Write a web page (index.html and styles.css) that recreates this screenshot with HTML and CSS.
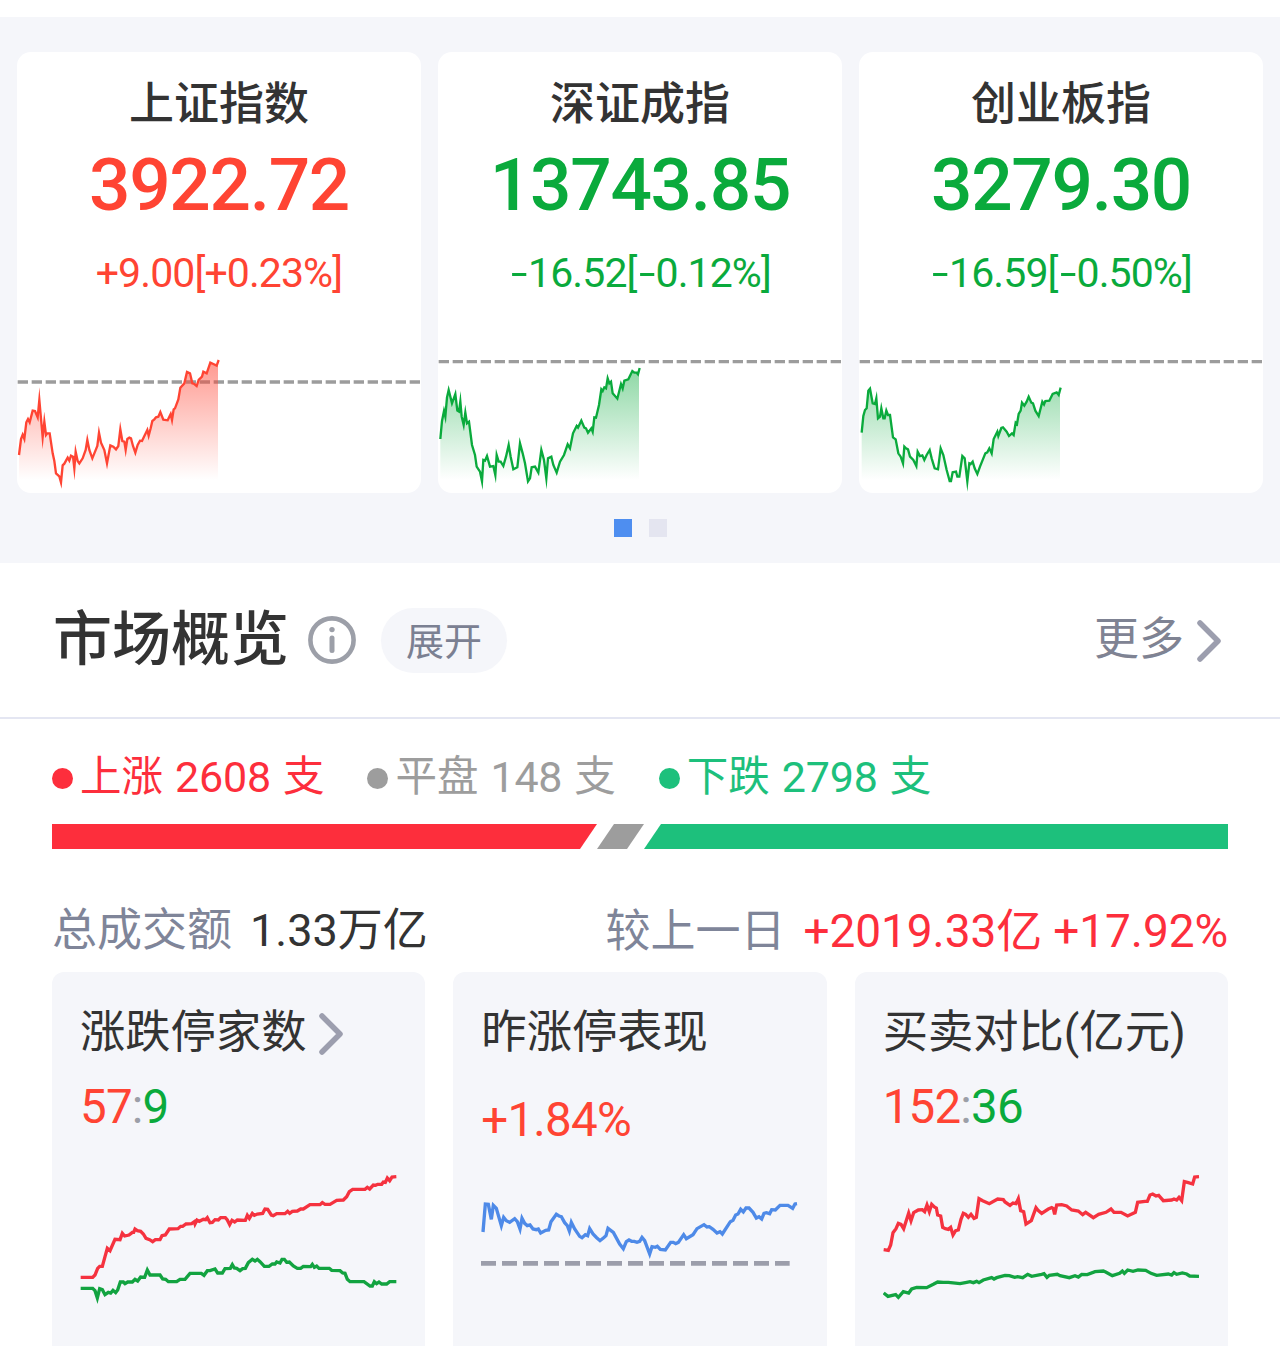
FILE: index.html
```html
<!DOCTYPE html>
<html lang="zh-CN">
<head>
    <meta charset="UTF-8">
    <meta name="viewport" content="width=device-width, initial-scale=1.0">
    <title>市场概览</title>
    <link rel="stylesheet" href="styles.css">
</head>
<body>

<section class="indices">
    <div class="index-list">
        <div class="index-card up">
            <h3>上证指数</h3>
            <div class="price">3922.72</div>
            <div class="change">+9.00[+0.23%]</div>
            <svg class="trend" viewBox="51 0 1212 459">
                <defs>
                    <linearGradient id="fillUp" gradientUnits="userSpaceOnUse" x1="0" y1="60" x2="0" y2="420">
                        <stop offset="0" stop-color="#ff4433" stop-opacity="0.55"/>
                        <stop offset="1" stop-color="#ff4433" stop-opacity="0"/>
                    </linearGradient>
                </defs>
                <line class="base" x1="53" y1="126" x2="1263" y2="126"/>
                <polygon fill="url(#fillUp)" points="57,420 57,345 63,297 68,284 73,297 79,247 84,237 89,247 98,212 105,213 113,232 118,180 128,292 133,245 138,285 142,280 149,280 158,340 163,363 168,400 178,409 183,420 188,376 193,371 203,353 208,362 213,347 219,350 223,385 227,335 233,363 238,370 248,355 257,330 262,300 268,330 277,355 292,318 297,278 303,308 313,330 321,370 331,316 340,320 348,328 355,318 361,268 367,303 373,305 377,330 382,297 388,293 393,295 399,318 406,338 413,315 420,302 426,303 432,290 442,270 446,287 452,265 457,243 463,238 468,232 475,230 481,216 490,239 503,241 512,222 516,240 521,208 525,205 535,178 541,143 553,130 561,96 570,100 577,130 583,132 590,138 596,120 606,110 610,95 620,100 631,68 650,77 654,65 654,420"/>
                <polyline class="line" points="57,345 63,297 68,284 73,297 79,247 84,237 89,247 98,212 105,213 113,232 118,180 128,292 133,245 138,285 142,280 149,280 158,340 163,363 168,400 178,409 183,427 188,376 193,371 203,353 208,362 213,347 219,350 223,385 227,335 233,363 238,370 248,355 257,330 262,300 268,330 277,355 292,318 297,278 303,308 313,330 321,370 331,316 340,320 348,328 355,318 361,268 367,303 373,305 377,330 382,297 388,293 393,295 399,318 406,338 413,315 420,302 426,303 432,290 442,270 446,287 452,265 457,243 463,238 468,232 475,230 481,216 490,239 503,241 512,222 516,240 521,208 525,205 535,178 541,143 553,130 561,96 570,100 577,130 583,132 590,138 596,120 606,110 610,95 620,100 631,68 640,72 650,77 656,60"/>
            </svg>
        </div>
        <div class="index-card down">
            <h3>深证成指</h3>
            <div class="price">13743.85</div>
            <div class="change"><i>-</i>16.52[<i>-</i>0.12%]</div>
            <svg class="trend" viewBox="24 0 1212 459">
                <defs>
                    <linearGradient id="fillDown" gradientUnits="userSpaceOnUse" x1="0" y1="60" x2="0" y2="420">
                        <stop offset="0" stop-color="#0aaa3c" stop-opacity="0.5"/>
                        <stop offset="1" stop-color="#0aaa3c" stop-opacity="0"/>
                    </linearGradient>
                </defs>
                <line class="base" x1="26" y1="65" x2="1236" y2="65"/>
                <polygon fill="url(#fillDown)" points="31,420 31,297 36,243 42,213 46,230 51,172 56,150 66,190 76,162 82,212 87,215 91,185 95,230 101,255 106,218 111,250 117,245 126,315 135,345 140,380 150,395 156,420 160,360 165,362 171,348 180,380 190,378 196,400 200,345 206,365 212,365 220,378 228,350 236,315 242,350 250,388 262,382 270,310 278,340 285,370 294,420 300,410 305,382 315,380 325,398 334,330 342,360 349,410 354,355 364,350 370,375 380,398 390,365 402,345 413,313 420,325 429,280 440,258 444,263 454,242 463,263 468,265 474,278 484,265 488,275 493,232 498,233 507,195 514,148 518,153 523,142 528,145 533,115 538,130 543,125 548,160 562,176 573,132 578,145 583,122 595,118 607,93 620,98 627,92 627,420"/>
                <polyline class="line" points="31,297 36,243 42,213 46,230 51,172 56,150 66,190 76,162 82,212 87,215 91,185 95,230 101,255 106,218 111,250 117,245 126,315 135,345 140,380 150,395 156,424 160,360 165,362 171,348 180,380 190,378 196,405 200,345 206,365 212,365 220,378 228,350 236,315 242,350 250,388 262,382 270,310 278,340 285,370 294,424 300,415 305,382 315,380 325,398 334,330 342,360 349,415 354,355 364,350 370,375 380,398 390,365 402,345 413,313 420,325 429,280 440,258 444,263 454,242 463,263 468,265 474,278 484,265 488,275 493,232 498,233 507,195 514,148 518,153 523,142 528,145 533,115 538,130 543,125 548,160 562,176 573,132 578,145 583,122 595,118 607,93 613,98 620,98 624,103 629,84"/>
            </svg>
        </div>
        <div class="index-card down">
            <h3>创业板指</h3>
            <div class="price">3279.30</div>
            <div class="change"><i>-</i>16.59[<i>-</i>0.50%]</div>
            <svg class="trend" viewBox="27 0 1212 459">
                <line class="base" x1="29" y1="65" x2="1239" y2="65"/>
                <polygon fill="url(#fillDown)" points="35,420 35,278 40,228 45,210 50,205 55,152 60,146 68,190 75,192 79,175 84,235 90,230 94,205 100,235 104,235 109,212 114,225 120,225 129,292 137,298 145,340 152,350 159,370 163,320 168,325 174,328 180,350 190,360 199,378 203,335 210,348 217,346 223,360 230,345 239,330 245,355 254,385 264,388 272,325 280,345 290,390 299,420 303,420 308,397 318,395 326,412 337,348 344,355 352,412 358,370 368,365 374,385 382,402 390,380 406,340 412,337 418,325 425,340 431,297 442,275 445,288 454,264 459,262 470,275 477,288 486,280 491,285 497,248 501,252 506,222 512,212 516,188 523,197 530,185 536,170 544,188 549,190 556,212 566,228 577,185 582,193 586,183 598,182 608,162 620,157 630,155 630,420"/>
                <polyline class="line" points="35,278 40,228 45,210 50,205 55,152 60,146 68,190 75,192 79,175 84,235 90,230 94,205 100,235 104,235 109,212 114,225 120,225 129,292 137,298 145,340 152,350 159,370 163,320 168,325 174,328 180,350 190,360 199,378 203,335 210,348 217,346 223,360 230,345 239,330 245,355 254,385 264,388 272,325 280,345 290,390 299,423 303,423 308,397 318,395 322,410 328,410 337,348 344,355 352,424 358,370 362,372 368,365 374,385 382,402 390,380 406,340 412,337 418,325 425,340 431,297 442,275 445,288 454,264 459,262 470,275 477,288 486,280 491,285 497,248 501,252 506,222 512,212 516,188 523,197 530,185 536,170 544,188 549,190 556,212 566,228 577,185 582,193 586,183 598,182 608,162 620,157 626,165 632,143"/>
            </svg>
        </div>
    </div>
    <div class="pager">
        <span class="active"></span>
        <span></span>
    </div>
</section>

<header class="overview-header">
    <h2>市场概览</h2>
    <svg class="info" viewBox="0 0 48 48">
        <circle cx="24" cy="24" r="21.6" fill="none" stroke="currentColor" stroke-width="4.6"/>
        <circle cx="24" cy="13.6" r="2.7" fill="currentColor"/>
        <path d="M24 22v12.5" stroke="currentColor" stroke-width="5" stroke-linecap="round"/>
    </svg>
    <button class="expand">展开</button>
    <a class="more">更多
        <svg class="arrow" viewBox="0 0 24 42"><path d="M3 3l18 18L3 39"/></svg>
    </a>
</header>

<main class="overview">
    <div class="legend">
        <span class="rise">上涨 <b>2608</b> 支</span>
        <span class="flat">平盘 <b>148</b> 支</span>
        <span class="fall">下跌 <b>2798</b> 支</span>
    </div>
    <div class="ratio">
        <div class="seg seg-rise"></div>
        <div class="seg seg-flat"></div>
        <div class="seg seg-fall"></div>
    </div>

    <div class="turnover">
        <div><label>总成交额</label><span class="total">1.33万亿</span></div>
        <div><label>较上一日</label><span class="diff">+2019.33亿 +17.92%</span></div>
    </div>

    <div class="stats">
        <div class="stat">
            <h4>涨跌停家数<svg class="arrow" viewBox="0 0 24 42"><path d="M3 3l18 18L3 39"/></svg></h4>
            <div class="value"><span class="c-up">57</span><span class="colon">:</span><span class="c-down">9</span></div>
            <svg class="mini" viewBox="60 0 951 480">
                <polyline class="s-red" points="62,352 98,352 105,345 113,325 119,319 127,319 135,290 142,265 150,272 165,238 180,239 187,220 194,228 207,225 217,217 221,217 225,207 232,212 242,214 250,222 258,235 269,239 278,245 286,239 300,239 306,227 316,225 328,207 354,206 362,199 368,199 378,192 395,191 403,185 405,192 411,180 418,184 430,178 437,179 442,173 450,188 457,187 465,179 475,180 482,173 496,173 502,180 509,194 516,181 524,186 532,180 556,181 562,166 568,175 577,160 583,166 592,162 608,160 615,147 623,148 634,165 640,167 650,161 675,161 683,154 689,160 697,154 712,153 722,147 730,147 750,134 780,134 787,128 795,133 810,133 830,121 850,120 860,110 868,95 878,88 915,88 922,82 929,87 940,75 947,76 953,73 965,73 970,66 976,67 982,54 989,62 996,51 1009,50"/>
                <polyline class="s-green" points="62,385 98,385 105,392 112,414 119,386 127,389 135,404 145,397 152,399 159,391 167,398 173,390 181,366 190,366 195,371 203,366 217,366 225,358 233,363 242,351 254,352 262,330 270,345 300,345 308,357 317,358 325,365 350,365 360,358 375,358 390,340 424,340 432,346 442,332 450,332 465,327 473,339 487,339 495,326 511,325 517,314 523,324 530,325 540,332 548,326 556,325 565,308 577,298 585,303 592,298 600,305 613,319 627,319 637,312 645,312 650,306 660,309 666,298 673,298 680,307 688,306 700,318 712,325 722,325 730,319 752,320 757,313 763,322 770,318 777,325 808,325 815,331 840,332 848,339 855,340 862,358 870,365 912,365 930,378 937,378 943,365 950,371 957,366 965,372 980,372 989,365 1009,365"/>
            </svg>
        </div>
        <div class="stat">
            <h4>昨涨停表现</h4>
            <div class="value offset"><span class="c-up">+1.84%</span></div>
            <svg class="mini mini-low" viewBox="64 0 951 330">
                <polyline class="s-blue" points="70,156 77,72 86,73 95,118 101,76 110,85 125,137 132,112 140,122 150,127 165,116 173,125 181,147 187,115 195,130 203,137 211,135 220,147 230,149 236,147 243,159 258,151 267,150 274,125 290,103 298,108 305,110 315,128 323,137 329,153 335,127 345,147 360,169 367,173 377,164 384,167 390,146 400,162 411,173 421,182 432,173 439,167 445,145 461,157 480,192 491,206 500,185 508,180 516,184 524,184 532,187 540,184 547,172 555,182 570,222 577,200 587,202 593,199 602,208 617,210 633,187 641,187 648,191 656,187 672,164 680,176 700,164 712,146 733,134 742,141 749,140 760,148 772,159 781,155 788,162 812,125 820,121 828,105 835,102 843,88 851,96 859,84 868,84 880,97 890,114 898,110 906,117 913,100 920,98 930,101 936,89 947,90 961,76 985,76 999,85 1006,72 1012,71"/>
                <line class="mini-base" x1="64" y1="250" x2="990" y2="250"/>
            </svg>
        </div>
        <div class="stat">
            <h4>买卖对比(亿元)</h4>
            <div class="value"><span class="c-up">152</span><span class="colon">:</span><span class="c-down">36</span></div>
            <svg class="mini" viewBox="69 0 951 480">
                <polyline class="s-red" points="71,269 85,271 92,255 99,218 108,206 115,190 123,193 131,206 146,159 153,182 161,158 175,150 187,149 194,155 201,135 208,155 215,133 223,141 229,144 233,165 242,168 248,202 256,206 265,208 272,202 279,225 287,212 295,210 303,178 310,160 317,163 325,172 333,163 342,175 349,172 357,116 368,122 388,131 413,117 430,119 435,126 450,136 459,129 468,131 475,116 482,152 491,155 498,192 514,182 528,143 535,152 545,160 565,147 575,143 580,146 584,163 590,135 605,134 620,138 635,150 655,153 668,164 677,157 700,173 716,163 738,157 753,147 762,157 783,157 803,168 826,157 833,127 855,124 862,124 870,105 878,102 888,108 896,106 910,122 935,120 942,117 950,120 957,112 965,122 973,65 985,68 998,72 1004,51 1017,50"/>
                <polyline class="s-green" points="71,399 84,409 107,404 115,412 130,395 146,399 155,387 170,382 200,383 220,373 233,366 250,367 265,367 300,371 320,367 330,365 340,368 350,364 357,368 370,360 395,353 402,357 410,353 435,346 448,347 464,352 473,350 488,353 503,343 515,349 545,343 552,341 561,352 568,346 592,343 600,347 628,353 645,347 655,351 665,343 682,344 705,335 730,333 737,336 757,347 779,340 787,333 793,340 803,330 819,334 834,330 857,331 873,340 890,346 925,342 935,345 942,338 950,343 967,339 980,342 989,348 1017,349"/>
            </svg>
        </div>
    </div>
</main>

</body>
</html>
```

FILE: styles.css
```css
* {
    box-sizing: border-box;
}
body {
    margin: 0;
    padding-top: 17px;
    height: 1346px;
    overflow: hidden;
    background-color: #fff;
    color: #333;
    font-family: Roboto, "Noto Sans CJK SC", sans-serif;
}
h2, h3, h4 {
    margin: 0;
    font-weight: 500;
}
svg {
    display: block;
    flex: none;
}

/* 指数卡片 */
.indices {
    height: 546px;
    padding: 35px 17px 0;
    background-color: #f5f6fa;
}
.index-list {
    display: grid;
    grid-template-columns: repeat(3, 1fr);
    gap: 17px;
}
.index-card {
    height: 441px;
    border-radius: 14px;
    background-color: #fff;
    text-align: center;
    overflow: hidden;
}
.index-card h3 {
    margin-top: 21px;
    font-size: 45px;
    line-height: 64px;
}
.price {
    height: 96px;
    font-size: 73px;
    font-weight: 500;
    line-height: 96px;
    letter-spacing: -1.3px;
}
.change {
    height: 60px;
    margin-top: 10px;
    font-size: 41px;
    line-height: 60px;
    letter-spacing: -0.9px;
}
.change i {
    display: inline-block;
    width: 19px;
    font-style: normal;
    transform: scaleX(1.45);
}
.trend {
    width: 404px;
    height: 153px;
    margin-top: 37px;
}
.up {
    --tone: #ff4433;
}
.down {
    --tone: #0aaa3c;
}
.price, .change {
    color: var(--tone);
}
.line {
    fill: none;
    stroke: var(--tone);
    stroke-width: 7;
    stroke-miterlimit: 12;
}
.base {
    stroke: #9c9c9c;
    stroke-width: 10;
    stroke-dasharray: 31 11;
}
.pager {
    display: flex;
    justify-content: center;
    gap: 17px;
    margin-top: 26px;
}
.pager span {
    width: 18px;
    height: 18px;
    background-color: #e4e5f0;
}
.pager .active {
    background-color: #4e8ef0;
}

/* 标题栏 */
.overview-header {
    display: flex;
    align-items: center;
    height: 156px;
    padding: 0 59px 0 53px;
    border-bottom: 2px solid #e4e6f2;
}
h2 {
    width: 236px;
    font-size: 59px;
    line-height: 80px;
    white-space: nowrap;
}
.info {
    width: 48px;
    height: 48px;
    margin-left: 19px;
    color: #9c9fa8;
}
.expand {
    width: 126px;
    height: 65px;
    margin-left: 25px;
    padding: 0 0 3px;
    border: none;
    border-radius: 33px;
    background-color: #f5f6fa;
    color: #7b8092;
    font: 38px/60px "Noto Sans CJK SC", sans-serif;
}
.more {
    display: flex;
    align-items: center;
    gap: 13px;
    margin-left: auto;
    color: #7f8393;
    font-size: 45px;
    line-height: 60px;
}
.arrow {
    width: 24px;
    height: 42px;
    margin-top: 2px;
    fill: none;
    stroke: #9c9eae;
    stroke-width: 5.5;
    stroke-linecap: round;
    stroke-linejoin: round;
}

/* 涨跌分布 */
.overview {
    padding: 0 52px;
}
.legend {
    display: flex;
    align-items: flex-start;
    gap: 43px;
    height: 105px;
    padding-top: 28px;
    font-size: 41.5px;
    line-height: 60px;
}
.legend span {
    display: flex;
    align-items: center;
    gap: 12px;
    height: 60px;
    line-height: 56px;
}
.legend span::before {
    content: "";
    width: 21px;
    height: 21px;
    margin: 2px -5px 0 0;
    border-radius: 50%;
    background-color: currentColor;
}
.legend b {
    font-size: 43px;
    font-weight: 400;
    letter-spacing: -0.2px;
}
.rise {
    color: #fd2e3c;
}
.flat {
    color: #9d9d9d;
}
.fall {
    color: #1dc07c;
}
.ratio {
    display: flex;
    height: 25px;
}
.seg-rise {
    width: 545px;
    background-color: #fd2e3c;
    clip-path: polygon(0 0, 100% 0, calc(100% - 17px) 100%, 0 100%);
}
.seg-flat {
    width: 47px;
    background-color: #9d9d9d;
    clip-path: polygon(17px 0, 100% 0, calc(100% - 17px) 100%, 0 100%);
}
.seg-fall {
    flex: 1;
    background-color: #1dc07c;
    clip-path: polygon(17px 0, 100% 0, 100% 100%, 0 100%);
}

/* 成交额 */
.turnover {
    display: flex;
    justify-content: space-between;
    height: 123px;
    padding-top: 52px;
    font-size: 45px;
    line-height: 60px;
    white-space: nowrap;
}
.turnover label {
    margin-right: 18px;
    color: #7f8599;
}
.diff {
    color: #fd2e3c;
    font-size: 46px;
    letter-spacing: -0.1px;
}

/* 统计卡片 */
.stats {
    display: grid;
    grid-template-columns: repeat(3, 1fr);
    gap: 28px;
}
.stat {
    height: 420px;
    padding: 28px 28px 0;
    border-radius: 12px;
    background-color: #f5f6fa;
}
.stat h4 {
    display: flex;
    align-items: center;
    gap: 12px;
    height: 64px;
    padding-top: 1px;
    font-size: 45.3px;
    font-weight: 400;
    line-height: 60px;
    white-space: nowrap;
}
.value {
    height: 60px;
    margin-top: 13px;
    font-size: 47.5px;
    line-height: 60px;
    letter-spacing: -0.8px;
}
.value.offset {
    margin-top: 26px;
}
.c-up {
    color: #ff4433;
}
.c-down {
    color: #0aaa3c;
}
.colon {
    color: #9c9fa8;
}
.mini {
    width: 317px;
    height: 160px;
    margin-top: 23px;
    fill: none;
    stroke-width: 10;
}
.mini-low {
    height: 110px;
    margin-top: 30px;
}
.s-red {
    stroke: #f5323f;
}
.s-green {
    stroke: #12a340;
}
.s-blue {
    stroke: #4e8ae8;
}
.mini-base {
    stroke: #9c9eab;
    stroke-width: 14;
    stroke-dasharray: 45 18;
}
```
